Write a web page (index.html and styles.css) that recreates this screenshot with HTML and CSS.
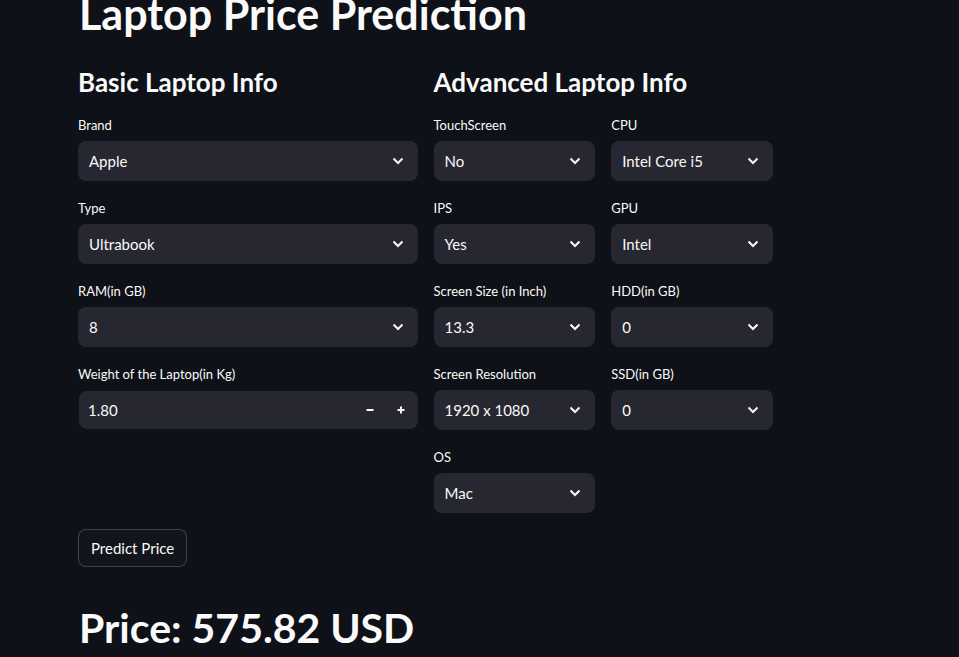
FILE: index.html
```html
<!DOCTYPE html>
<html lang="en">
<head>
    <meta charset="UTF-8">
    <meta name="viewport" content="width=device-width, initial-scale=1.0">
    <title>Laptop Price Prediction</title>
    <link rel="stylesheet" href="styles.css">
</head>
<body>
    <div class="main">
        <h1 class="title">Laptop Price Prediction</h1>

        <div class="columns">
            <div class="col">
                <h3>Basic Laptop Info</h3>
                <div class="field">
                    <label>Brand</label>
                    <div class="select"><span>Apple</span><svg class="chev" viewBox="0 0 12 8"><path d="M1.5 1.5 6 6l4.5-4.5"/></svg></div>
                </div>
                <div class="field">
                    <label>Type</label>
                    <div class="select"><span>Ultrabook</span><svg class="chev" viewBox="0 0 12 8"><path d="M1.5 1.5 6 6l4.5-4.5"/></svg></div>
                </div>
                <div class="field">
                    <label>RAM(in GB)</label>
                    <div class="select"><span>8</span><svg class="chev" viewBox="0 0 12 8"><path d="M1.5 1.5 6 6l4.5-4.5"/></svg></div>
                </div>
                <div class="field">
                    <label>Weight of the Laptop(in Kg)</label>
                    <div class="number">
                        <span>1.80</span>
                        <div class="steps">
                            <svg viewBox="0 0 10 10"><path d="M1.5 5h7"/></svg>
                            <svg viewBox="0 0 10 10"><path d="M1.5 5h7M5 1.5v7"/></svg>
                        </div>
                    </div>
                </div>
            </div>

            <div class="col">
                <h3>Advanced Laptop Info</h3>
                <div class="subcols">
                    <div class="sub">
                        <div class="field">
                            <label>TouchScreen</label>
                            <div class="select"><span>No</span><svg class="chev" viewBox="0 0 12 8"><path d="M1.5 1.5 6 6l4.5-4.5"/></svg></div>
                        </div>
                        <div class="field">
                            <label>IPS</label>
                            <div class="select"><span>Yes</span><svg class="chev" viewBox="0 0 12 8"><path d="M1.5 1.5 6 6l4.5-4.5"/></svg></div>
                        </div>
                        <div class="field">
                            <label>Screen Size (in Inch)</label>
                            <div class="select"><span>13.3</span><svg class="chev" viewBox="0 0 12 8"><path d="M1.5 1.5 6 6l4.5-4.5"/></svg></div>
                        </div>
                        <div class="field">
                            <label>Screen Resolution</label>
                            <div class="select"><span>1920 x 1080</span><svg class="chev" viewBox="0 0 12 8"><path d="M1.5 1.5 6 6l4.5-4.5"/></svg></div>
                        </div>
                        <div class="field">
                            <label>OS</label>
                            <div class="select"><span>Mac</span><svg class="chev" viewBox="0 0 12 8"><path d="M1.5 1.5 6 6l4.5-4.5"/></svg></div>
                        </div>
                    </div>
                    <div class="sub">
                        <div class="field">
                            <label>CPU</label>
                            <div class="select"><span>Intel Core i5</span><svg class="chev" viewBox="0 0 12 8"><path d="M1.5 1.5 6 6l4.5-4.5"/></svg></div>
                        </div>
                        <div class="field">
                            <label>GPU</label>
                            <div class="select"><span>Intel</span><svg class="chev" viewBox="0 0 12 8"><path d="M1.5 1.5 6 6l4.5-4.5"/></svg></div>
                        </div>
                        <div class="field">
                            <label>HDD(in GB)</label>
                            <div class="select"><span>0</span><svg class="chev" viewBox="0 0 12 8"><path d="M1.5 1.5 6 6l4.5-4.5"/></svg></div>
                        </div>
                        <div class="field">
                            <label>SSD(in GB)</label>
                            <div class="select"><span>0</span><svg class="chev" viewBox="0 0 12 8"><path d="M1.5 1.5 6 6l4.5-4.5"/></svg></div>
                        </div>
                    </div>
                </div>
            </div>
        </div>

        <button class="predict">Predict Price</button>

        <h2 class="price">Price: 575.82 USD</h2>
    </div>
</body>
</html>
```

FILE: styles.css
```css
body {
    background-color: #0e1117;
    color: #fafafa;
    font-family: "Lato", "Open Sans", sans-serif;
    margin: 0;
    height: 657px;
    overflow: hidden;
}
.main {
    width: 695px;
    padding-left: 78px;
}
.title {
    font-size: 43px;
    font-weight: 700;
    line-height: 1;
    margin: -8px 0 0 1px;
    height: 44px;
}
.columns {
    display: flex;
    gap: 16px;
    margin-top: 29px;
}
.col {
    flex: 1;
}
h3 {
    font-size: 26px;
    font-weight: 700;
    line-height: 34px;
    margin: 0 0 18px 0;
}
.subcols {
    display: flex;
    gap: 16px;
}
.sub {
    flex: 1;
}
.field {
    height: 83px;
}
.field label {
    display: block;
    font-size: 13px;
    line-height: 16px;
    height: 24px;
}
.select,
.number {
    height: 40px;
    background-color: #262730;
    border-radius: 8px;
    display: flex;
    align-items: center;
    justify-content: space-between;
    padding: 0 11px;
    font-size: 15px;
    box-sizing: border-box;
}
.number {
    height: 38px;
    margin: 1px 0 0 1px;
    padding-left: 9px;
}
.chev {
    width: 12px;
    height: 8px;
    fill: none;
    stroke: #fafafa;
    stroke-width: 2;
    margin-right: 3px;
}
.steps {
    display: flex;
    gap: 21px;
    margin-right: 1px;
}
.steps svg {
    width: 10px;
    height: 10px;
    fill: none;
    stroke: #fafafa;
    stroke-width: 2;
}
.predict {
    display: block;
    margin-top: -3px;
    height: 38px;
    padding: 0 12px;
    background-color: #12151c;
    color: #fafafa;
    border: 1px solid rgba(250, 250, 250, 0.2);
    border-radius: 8px;
    font-family: inherit;
    font-size: 15px;
}
.price {
    font-size: 41px;
    font-weight: 700;
    line-height: 1;
    margin: 40px 0 0 1px;
}
```
